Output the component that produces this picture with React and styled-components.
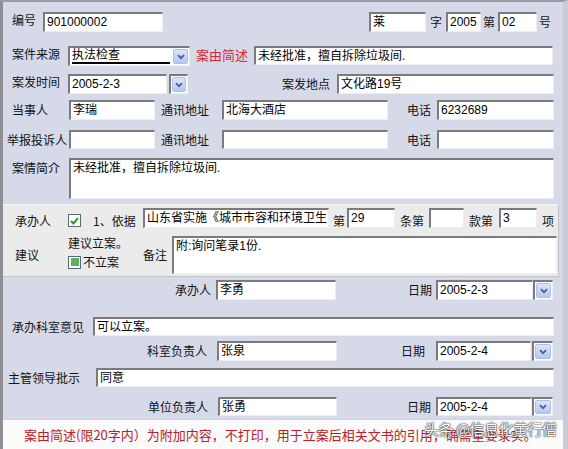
import React from "react";
import styled, { createGlobalStyle } from "styled-components";

const GlobalStyle = createGlobalStyle`
  html, body {
    margin: 0;
    padding: 0;
    background: #d6d9e7;
  }
  body {
    font-family: "Noto Sans CJK SC", "Liberation Sans", sans-serif;
  }
`;

const Frame = styled.div`
  width: 568px;
  height: 449px;
  box-sizing: border-box;
  border-left: 3px solid #8e8e94;
  border-top: 2px solid #9a9ba2;
  border-right: 5px solid #c9ccd8;
  background: #d6d9e7;
  overflow: hidden;
  display: flex;
  flex-direction: column;
`;

const Row = styled.div`
  display: flex;
  align-items: ${({ $align }) => $align || "center"};
  height: ${({ $h }) => $h}px;
  margin-top: ${({ $mt }) => $mt || 0}px;
  flex-shrink: 0;
`;

const Label = styled.span`
  flex: none;
  box-sizing: border-box;
  width: ${({ $w }) => ($w ? `${$w}px` : "auto")};
  margin-left: ${({ $ml }) => $ml || 0}px;
  margin-top: ${({ $top }) => $top || 0}px;
  margin-bottom: ${({ $lift }) => ($lift || 0) * 2}px;
  font-size: ${({ $size }) => $size || 12}px;
  line-height: 14px;
  color: ${({ $red }) => ($red ? "#d8283a" : "#141414")};
  white-space: nowrap;
`;

const Field = styled.div`
  flex: none;
  box-sizing: border-box;
  width: ${({ $w }) => $w}px;
  height: ${({ $h }) => ($h ? `${$h}px` : "100%")};
  margin-left: ${({ $ml }) => $ml || 0}px;
  background: #fff;
  border-top: 2px solid #7b7b7f;
  border-left: 2px solid #7b7b7f;
  border-right: 1px solid #eceef4;
  border-bottom: 1px solid #eceef4;
  padding: ${({ $multi }) => ($multi ? "1px 2px" : "0 2px")};
  display: flex;
  align-items: ${({ $multi }) => ($multi ? "flex-start" : "center")};
  font-family: "Liberation Sans", "Noto Sans CJK SC", sans-serif;
  font-size: 12px;
  line-height: 15px;
  color: #000;
  overflow: hidden;
  white-space: nowrap;
`;

const SelectText = styled.span`
  flex: 1;
  line-height: 13px;
  border-bottom: 2px solid #000;
  margin-right: 3px;
`;

const DropWell = styled.div`
  flex: none;
  box-sizing: border-box;
  width: ${({ $w }) => $w || 20}px;
  height: 100%;
  margin-left: ${({ $ml }) => $ml || 0}px;
  background: #fff;
  border-top: 2px solid #7b7b7f;
  border-left: 2px solid #7b7b7f;
  border-right: 1px solid #eceef4;
  border-bottom: 1px solid #eceef4;
  padding: 1px;
  display: flex;
`;

const DropFace = styled.div`
  flex: ${({ $w }) => ($w ? "none" : 1)};
  width: ${({ $w }) => ($w ? `${$w}px` : "auto")};
  height: ${({ $w }) => ($w ? "15px" : "auto")};
  box-sizing: border-box;
  background: linear-gradient(#dbe5fb, #b5c7f2);
  border: 1px solid #adc0ea;
  border-radius: 2px;
  display: flex;
  align-items: center;
  justify-content: center;
`;

const Chevron = () => (
  <svg width="8" height="6" viewBox="0 0 8 6">
    <path d="M1 1.2 L4 4.2 L7 1.2" fill="none" stroke="#4b5e8c" strokeWidth="1.8" />
  </svg>
);

const Box = styled.span`
  flex: none;
  width: 13px;
  height: 13px;
  box-sizing: border-box;
  border: 1px solid #5c6874;
  background: #fff;
  display: inline-flex;
  align-items: center;
  justify-content: center;
`;

const Fill = styled.span`
  width: 8px;
  height: 8px;
  background: #5cb45c;
`;

const Panel = styled.div`
  flex-shrink: 0;
  width: 556px;
  height: 73px;
  box-sizing: border-box;
  margin-top: 5px;
  padding-top: 3px;
  background: #ebebeb;
  border-top: 1px solid #f6f6f6;
  border-bottom: 1px solid #c3c4cb;
  border-right: 1px solid #c3c4cb;
  display: flex;
  flex-direction: column;
`;

const Col = styled.div`
  flex: none;
  width: ${({ $w }) => $w}px;
  height: 100%;
  display: flex;
  flex-direction: column;
`;

const CheckLine = styled.div`
  display: flex;
  align-items: center;
  gap: 2px;
  margin-top: 5px;
`;

const Strip = styled.div`
  position: relative;
  flex-shrink: 0;
  height: 30px;
  margin-top: 3px;
  background: #fbfbfb;
  border-top: 1px solid #cfd2dc;
  padding-left: 21px;
  font-size: 13px;
  line-height: 29px;
  color: #b8202a;
  white-space: nowrap;
`;

const Watermark = styled.span`
  position: absolute;
  left: 421px;
  top: -1px;
  font-size: 15px;
  line-height: 19px;
  color: #fafafa;
  text-shadow: 0 0 1px #333, 0 0 1px #333, 0 0 2px #555;
  letter-spacing: -0.5px;
`;

const Select = ({ w, ml, children }) => (
  <Field $w={w} $ml={ml} style={{ paddingRight: 1 }}>
    <SelectText>{children}</SelectText>
    <DropFace $w={15}>
      <Chevron />
    </DropFace>
  </Field>
);

const DropBtn = ({ w, ml }) => (
  <DropWell $w={w} $ml={ml}>
    <DropFace>
      <Chevron />
    </DropFace>
  </DropWell>
);

export default function App() {
  return (
    <>
      <GlobalStyle />
      <Frame>
        <Row $h={20} $mt={10}>
          <Label $ml={9} $w={31} $lift={2}>编号</Label>
          <Field $w={120}>901000002</Field>
          <Field $w={57} $ml={206}>莱</Field>
          <Label $ml={4} $w={16}>字</Label>
          <Field $w={35}>2005</Field>
          <Label $ml={2} $w={15}>第</Label>
          <Field $w={39}>02</Field>
          <Label $ml={2}>号</Label>
        </Row>

        <Row $h={20} $mt={14}>
          <Label $ml={9} $w={56} $lift={2}>案件来源</Label>
          <Select w={122}>执法检查</Select>
          <Label $ml={6} $w={58} $size={13} $red $lift={1}>案由简述</Label>
          <Field $w={299} $h={19} style={{ alignSelf: "flex-start" }}>
            未经批准，擅自拆除垃圾间.
          </Field>
        </Row>

        <Row $h={20} $mt={8}>
          <Label $ml={9} $w={56} $lift={2}>案发时间</Label>
          <Field $w={99}>2005-2-3</Field>
          <DropBtn ml={2} w={19} />
          <Label $ml={94} $w={55}>案发地点</Label>
          <Field $w={217}>文化路19号</Field>
        </Row>

        <Row $h={20} $mt={6}>
          <Label $ml={9} $w={57}>当事人</Label>
          <Field $w={86}>李瑞</Field>
          <Label $ml={6} $w={61}>通讯地址</Label>
          <Field $w={166}>北海大酒店</Field>
          <Label $ml={19} $w={30}>电话</Label>
          <Field $w={117}>6232689</Field>
        </Row>

        <Row $h={19} $mt={10}>
          <Label $ml={4} $w={62}>举报投诉人</Label>
          <Field $w={86} />
          <Label $ml={6} $w={61}>通讯地址</Label>
          <Field $w={166} />
          <Label $ml={19} $w={30}>电话</Label>
          <Field $w={117} />
        </Row>

        <Row $h={41} $mt={9} $align="flex-start">
          <Label $ml={9} $w={57} $top={3}>案情简介</Label>
          <Field $w={485} $multi>未经批准，擅自拆除垃圾间.</Field>
        </Row>

        <Panel>
          <Row $h={20} $align="flex-end">
            <Label $ml={12} $w={53}>承办人</Label>
            <Box style={{ marginBottom: 1 }}>
              <svg width="9" height="8" viewBox="0 0 9 8">
                <path d="M1 4 L3.5 6.5 L8 1.2" fill="none" stroke="#21a121" strokeWidth="2" />
              </svg>
            </Box>
            <Label $ml={12} $w={50}>1、依据</Label>
            <Field $w={186} style={{ fontSize: 12 }}>山东省实施《城市市容和环境卫生</Field>
            <Label $ml={4} $w={14}>第</Label>
            <Field $w={48}>29</Field>
            <Label $ml={5} $w={29}>条第</Label>
            <Field $w={35} />
            <Label $ml={5} $w={30}>款第</Label>
            <Field $w={38}>3</Field>
            <Label $ml={5}>项</Label>
          </Row>
          <Row $h={38} $mt={8}>
            <Label $ml={12} $w={53}>建议</Label>
            <Col $w={75}>
              <Label>建议立案。</Label>
              <CheckLine>
                <Box>
                  <Fill />
                </Box>
                <Label>不立案</Label>
              </CheckLine>
            </Col>
            <Label $w={29}>备注</Label>
            <Field $w={385} $multi>附:询问笔录1份.</Field>
          </Row>
        </Panel>

        <Row $h={20} $mt={3}>
          <Label $ml={172} $w={41}>承办人</Label>
          <Field $w={120}>李勇</Field>
          <Label $ml={72} $w={28}>日期</Label>
          <Field $w={97}>2005-2-3</Field>
          <DropBtn w={20} />
        </Row>

        <Row $h={19} $mt={17}>
          <Label $ml={9} $w={81}>承办科室意见</Label>
          <Field $w={461}>可以立案。</Field>
        </Row>

        <Row $h={20} $mt={5}>
          <Label $ml={144} $w={70}>科室负责人</Label>
          <Field $w={120}>张泉</Field>
          <Label $ml={64} $w={35}>日期</Label>
          <Field $w={95}>2005-2-4</Field>
          <DropBtn ml={1} w={21} />
        </Row>

        <Row $h={19} $mt={7}>
          <Label $ml={5} $w={88}>主管领导批示</Label>
          <Field $w={458}>同意</Field>
        </Row>

        <Row $h={19} $mt={10}>
          <Label $ml={145} $w={70}>单位负责人</Label>
          <Field $w={119}>张勇</Field>
          <Label $ml={70} $w={29}>日期</Label>
          <Field $w={96}>2005-2-4</Field>
          <DropBtn w={21} />
        </Row>

        <Strip>
          案由简述(限20字内）为附加内容，不打印，用于立案后相关文书的引用，确需重要录实。
          <Watermark>头条 @信息化黄行僧</Watermark>
        </Strip>
      </Frame>
    </>
  );
}
